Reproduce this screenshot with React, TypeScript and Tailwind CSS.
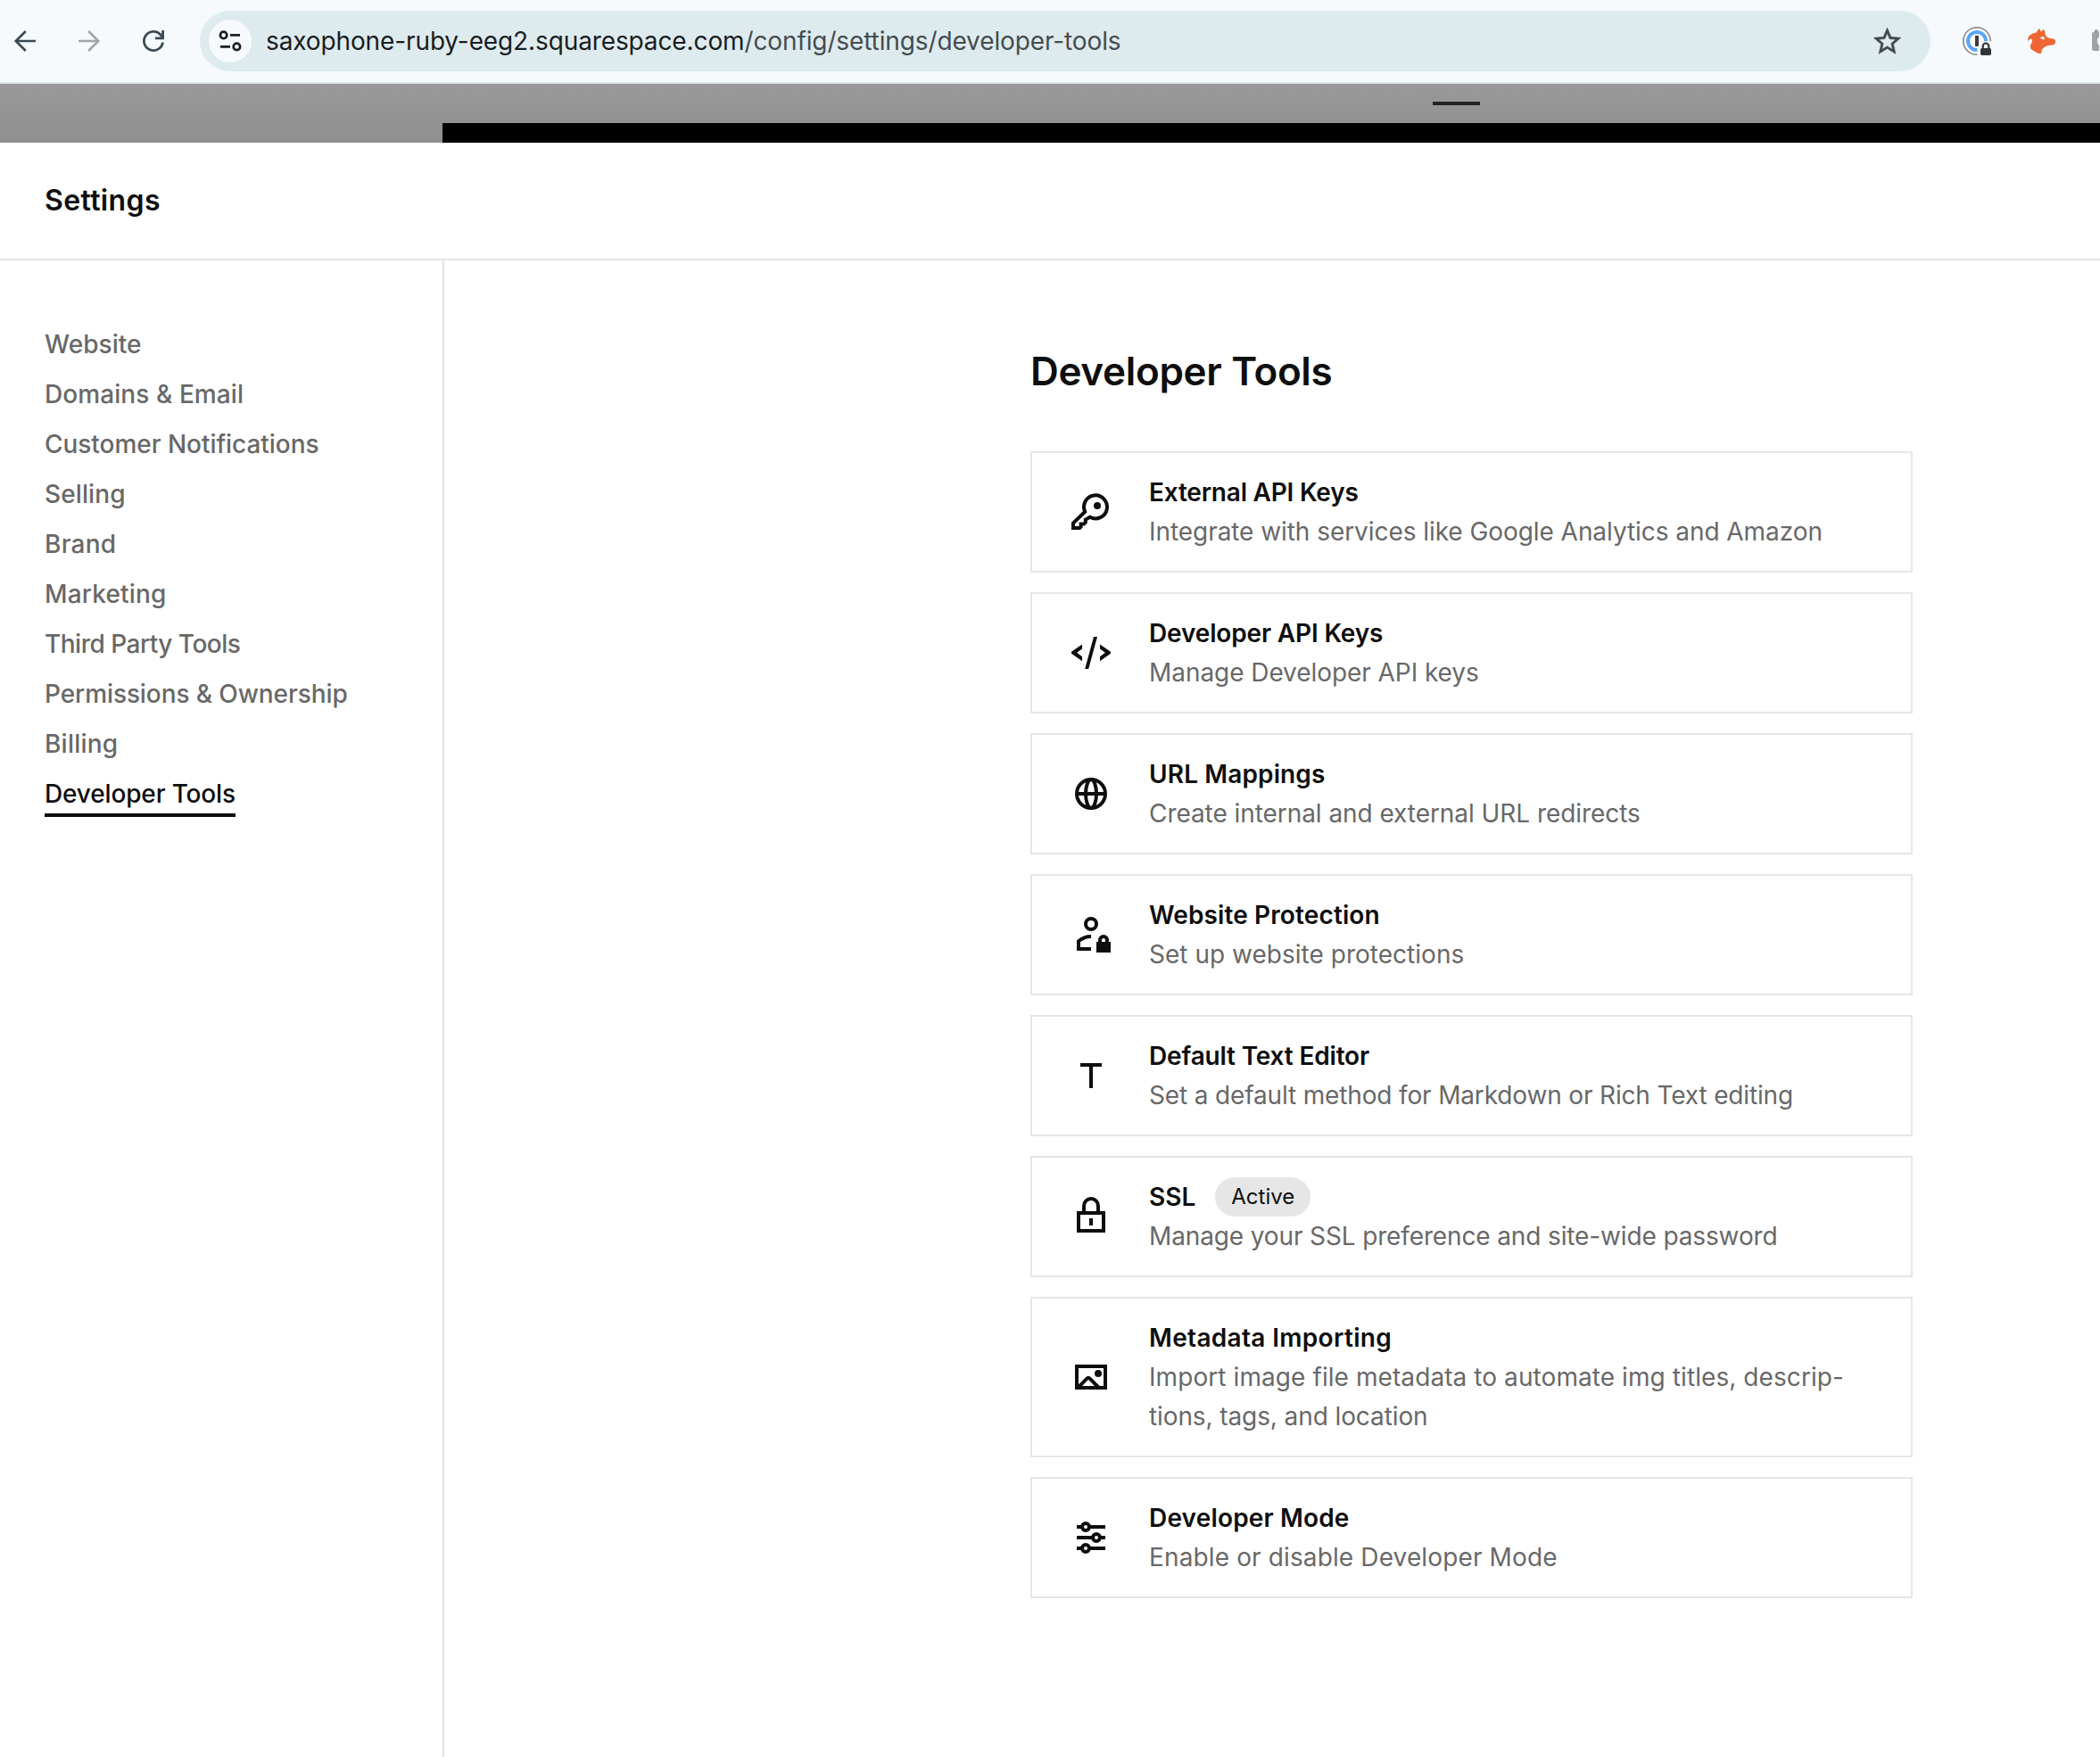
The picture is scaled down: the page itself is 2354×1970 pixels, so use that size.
import React from 'react';

const NAV = [
  { label: 'Website', cls: 'tracking-[0.05px]' },
  { label: 'Domains & Email', cls: 'tracking-[0.08px]' },
  { label: 'Customer Notifications', cls: 'tracking-[-0.04px]' },
  { label: 'Selling', cls: 'tracking-[0.1px]' },
  { label: 'Brand', cls: 'tracking-[0.25px]' },
  { label: 'Marketing', cls: 'tracking-[0.16px]' },
  { label: 'Third Party Tools', cls: 'tracking-[-0.51px]' },
  { label: 'Permissions & Ownership', cls: 'tracking-[-0.09px]' },
  { label: 'Billing', cls: 'tracking-[0.22px]' },
];

function Icon({ children }: { children: React.ReactNode }) {
  return (
    <svg viewBox="0 0 22 22" className="size-11 shrink-0 overflow-visible text-[#0e0e0e]" fill="none" stroke="currentColor" strokeWidth="2">
      {children}
    </svg>
  );
}

const KeyIcon = () => (
  <Icon>
    <path d="M7.6 10.9 1 17.3V20H4.6L5.3 19.3V17.7H7L7.9 16.8V15.3L10.4 13.9A6.5 6.5 0 1 0 7.6 10.9Z" />
    <circle cx="14.5" cy="7.5" r="2" fill="currentColor" stroke="none" />
  </Icon>
);

const CodeIcon = () => (
  <Icon>
    <path
      d="M6 6.2V8.7L3.1 10.9 6 13.1V15.6L0 11.4V10.4ZM16 6.2V8.7L18.9 10.9 16 13.1V15.6L22 11.4V10.4ZM12.5 2H14.5L9.6 20H7.6Z"
      fill="currentColor"
      stroke="none"
    />
  </Icon>
);

const GlobeIcon = () => (
  <Icon>
    <circle cx="11" cy="11" r="8" />
    <ellipse cx="11" cy="11" rx="3" ry="8" />
    <path d="M3 11H19" />
  </Icon>
);

const UserLockIcon = () => (
  <Icon>
    <circle cx="11" cy="5" r="3" />
    <path d="M11 12C8.4 12 6 12.9 4 14.6V19H11" />
    <path d="M16 15.5V14a2 2 0 0 1 4 0V15.5" />
    <path d="M14 15H22V21H14Z" fill="currentColor" stroke="none" />
  </Icon>
);

const TypeIcon = () => (
  <Icon>
    <path d="M5 5H17M11 5V18" />
  </Icon>
);

const LockIcon = () => (
  <Icon>
    <rect x="4" y="9" width="14" height="10" />
    <path d="M7 8.5V5a4 4 0 0 1 8 0V8.5M11 12V16" />
  </Icon>
);

const ImageIcon = () => (
  <Icon>
    <rect x="3" y="5" width="16" height="12" />
    <circle cx="15" cy="9" r="2" fill="currentColor" stroke="none" />
    <path d="M3.6 17 8.6 11.9Q9.5 11 10.4 11.9L15.4 17" />
  </Icon>
);

const SlidersIcon = () => (
  <Icon>
    <path d="M3 5H6M10 5H19M3 11H12M16 11H19M3 17H6M10 17H19" />
    <circle cx="8" cy="5" r="2" />
    <circle cx="14" cy="11" r="2" />
    <circle cx="8" cy="17" r="2" />
  </Icon>
);

type Tool = {
  icon: () => React.ReactElement;
  title: string;
  titleCls: string;
  lines: { text: string; cls: string }[];
  badge?: string;
};

const TOOLS: Tool[] = [
  {
    icon: KeyIcon,
    title: 'External API Keys',
    titleCls: 'tracking-[-0.21px]',
    lines: [{ text: 'Integrate with services like Google Analytics and Amazon', cls: 'tracking-[-0.06px]' }],
  },
  {
    icon: CodeIcon,
    title: 'Developer API Keys',
    titleCls: 'tracking-[-0.15px]',
    lines: [{ text: 'Manage Developer API keys', cls: 'tracking-[-0.06px]' }],
  },
  {
    icon: GlobeIcon,
    title: 'URL Mappings',
    titleCls: 'tracking-[0.13px]',
    lines: [{ text: 'Create internal and external URL redirects', cls: 'tracking-[-0.06px]' }],
  },
  {
    icon: UserLockIcon,
    title: 'Website Protection',
    titleCls: 'tracking-[0.12px]',
    lines: [{ text: 'Set up website protections', cls: 'tracking-[0.023px]' }],
  },
  {
    icon: TypeIcon,
    title: 'Default Text Editor',
    titleCls: 'tracking-[-0.17px]',
    lines: [{ text: 'Set a default method for Markdown or Rich Text editing', cls: 'tracking-[-0.152px]' }],
  },
  {
    icon: LockIcon,
    title: 'SSL',
    titleCls: 'tracking-[0px]',
    badge: 'Active',
    lines: [{ text: 'Manage your SSL preference and site-wide password', cls: 'tracking-[-0.13px]' }],
  },
  {
    icon: ImageIcon,
    title: 'Metadata Importing',
    titleCls: 'tracking-[0.33px]',
    lines: [
      { text: 'Import image file metadata to automate img titles, descrip-', cls: 'tracking-[0.08px]' },
      { text: 'tions, tags, and location', cls: 'tracking-[-0.1px]' },
    ],
  },
  {
    icon: SlidersIcon,
    title: 'Developer Mode',
    titleCls: 'tracking-[0.17px]',
    lines: [{ text: 'Enable or disable Developer Mode', cls: 'tracking-[0.13px]' }],
  },
];

function ToolCard({ tool }: { tool: Tool }) {
  const I = tool.icon;
  return (
    <div className="flex items-center gap-[43px] border-2 border-[#e6e6e6] bg-white py-[22px] pl-11">
      <I />
      <div className="text-[28px] leading-[44px] whitespace-nowrap">
        <div className="flex h-11 items-center">
          <span className={`font-semibold text-[#0e0e0e] ${tool.titleCls}`}>{tool.title}</span>
          {tool.badge && (
            <span className="ml-[22px] flex h-11 w-[107px] items-center justify-center rounded-full bg-[#e6e6e6] text-2xl leading-[44px] text-[#0e0e0e]">
              {tool.badge}
            </span>
          )}
        </div>
        {tool.lines.map((l) => (
          <div key={l.text} className={`text-[#686868] ${l.cls}`}>
            {l.text}
          </div>
        ))}
      </div>
    </div>
  );
}

function BrowserBar() {
  return (
    <div className="flex h-[94px] items-center overflow-hidden border-b-2 border-[#dbe5e6] bg-[#f6fafd]">
      <svg viewBox="0 0 24 24" className="ml-3 size-8 shrink-0 overflow-visible" fill="none" stroke="#3a4b51" strokeWidth="2">
        <path d="M21 12H4.4M12.6 3.7 4.3 12l8.3 8.3" />
      </svg>
      <svg viewBox="0 0 24 24" className="ml-10 size-8 shrink-0 overflow-visible" fill="none" stroke="#a3a5a6" strokeWidth="2">
        <path d="M3 12H19.6M11.4 3.7 19.7 12l-8.3 8.3" />
      </svg>
      <svg viewBox="0 0 32 32" className="ml-10 size-8 shrink-0 overflow-visible" fill="none" stroke="#3a4b51" strokeWidth="2.8">
        <path d="M26.5 17.5A10.6 10.6 0 1 1 24 9L26.3 11.6M26.6 4V12.9H18" />
      </svg>

      <div className="ml-9 flex h-[68px] w-[1940px] shrink-0 items-center rounded-full bg-[#deebee] pl-[10px]">
        <div className="flex size-12 shrink-0 items-center justify-center rounded-full bg-[#f6fafd]">
          <svg viewBox="0 0 24 24" className="size-6 overflow-visible" fill="none" stroke="#1b2023" strokeWidth="2.7">
            <circle cx="4.6" cy="5.4" r="3.7" />
            <path d="M12 5.4H23M1 18.4H12" />
            <circle cx="19.4" cy="18.4" r="3.7" />
          </svg>
        </div>
        <div className="ml-4 flex-1 text-[28px] leading-[44px] tracking-[-0.117px] whitespace-nowrap text-[#454c4f]">
          <span className="text-[#191d1f]">saxophone-ruby-eeg2.squarespace.com</span>/config/settings/developer-tools
        </div>
        <svg viewBox="0 0 24 24" className="mr-[30px] size-[37px] shrink-0" fill="#42494c" stroke="#42494c" strokeWidth="0.3">
          <path d="M22 9.24l-7.19-.62L12 2 9.19 8.63 2 9.24l5.46 4.73L5.82 21 12 17.27 18.18 21l-1.63-7.03L22 9.24zM12 15.4l-3.76 2.27 1-4.28-3.32-2.88 4.38-.38L12 6.1l1.71 4.04 4.38.38-3.32 2.88 1 4.28L12 15.4z" />
        </svg>
      </div>

      <svg viewBox="0 0 34 34" className="ml-[35px] size-[34px] shrink-0 overflow-visible" fill="none">
        <circle cx="17" cy="17" r="15.2" fill="#fff" stroke="#8b8d8f" strokeWidth="1.7" />
        <circle cx="17" cy="17" r="10" stroke="#5aa4fb" strokeWidth="4" />
        <path d="M15 11H19V23H15Z" fill="#3d3d3d" />
        <path d="M17.4 34V24Q19.5 22.6 20.2 19Q21.5 17.3 24 17.2H34V34Z" fill="#f6fafd" />
        <path d="M23.7 26V22.8a3.3 3.3 0 0 1 6.6 0V26" stroke="#333" strokeWidth="2.2" />
        <rect x="21" y="25" width="12" height="8" rx="1.8" fill="#333" />
      </svg>
      <svg viewBox="0 0 92 86" className="ml-[40px] h-[29px] w-[31px] shrink-0 overflow-visible">
        <path
          d="M0 42Q-1 31 5 24Q14 15 28 13L38 0Q42 4 44 10L54 2Q59 12 59 22Q64 30 72 32L88 35Q93 39 92 46Q90 53 84 55Q74 55 66 57Q56 60 50 67Q44 76 44 84Q34 84 26 78L11 69Q8 62 9 55Q15 48 15 42Q15 35 11 33Q5 35 0 42Z"
          fill="#ee6633"
        />
        <path d="M40 30Q46 26 55 28L56 37Q46 37 40 30Z" fill="#f6fafd" />
      </svg>
      <svg viewBox="0 0 8 26" className="ml-[41px] h-[26px] w-2 shrink-0">
        <path d="M0 5Q0 3 2 3L3 1.2Q3.4 0 4.6 0Q6.6 0 7 1.4L8 3V24H2Q0 24 0 22Z" fill="#a0a1a2" />
        <ellipse cx="8.8" cy="13" rx="3" ry="5" fill="#eceff1" />
      </svg>
    </div>
  );
}

export default function App() {
  return (
    <div className="flex h-[1970px] w-[2354px] flex-col overflow-hidden bg-white font-[Inter,sans-serif]">
      <BrowserBar />

      <div className="flex h-[66px] shrink-0 flex-col justify-between bg-linear-to-b from-[#999999] to-[#8f8f8f]">
        <div className="mt-5 ml-[1606px] h-1 w-[53px] bg-[#232323]" />
        <div className="ml-[496px] h-[22px] bg-black" />
      </div>

      <header className="flex h-[132px] shrink-0 items-center border-b-2 border-[#e6e6e6] pl-[50px]">
        <h1 className="text-[32px] leading-[44px] font-semibold tracking-[0.38px] text-[#0e0e0e]">Settings</h1>
      </header>

      <div className="flex min-h-0 flex-1">
        <nav className="flex w-[498px] shrink-0 flex-col items-start border-r-2 border-[#e6e6e6] pt-[66px] pl-[50px] text-[28px] leading-[56px] font-medium whitespace-nowrap text-[#686868]">
          {NAV.map((n) => (
            <a key={n.label} className={`h-14 ${n.cls}`}>
              {n.label}
            </a>
          ))}
          <a className="h-[54px] w-[214px] border-b-4 border-[#0e0e0e] tracking-[-0.15px] text-[#0e0e0e]">Developer Tools</a>
        </nav>

        <main className="flex-1 pt-[91px] pl-[657px]">
          <h2 className="text-[44px] leading-[66px] font-semibold tracking-[-0.32px] text-[#0e0e0e]">Developer Tools</h2>
          <div className="mt-[57px] flex w-[989px] flex-col gap-[22px]">
            {TOOLS.map((t) => (
              <ToolCard key={t.title} tool={t} />
            ))}
          </div>
        </main>
      </div>
    </div>
  );
}
